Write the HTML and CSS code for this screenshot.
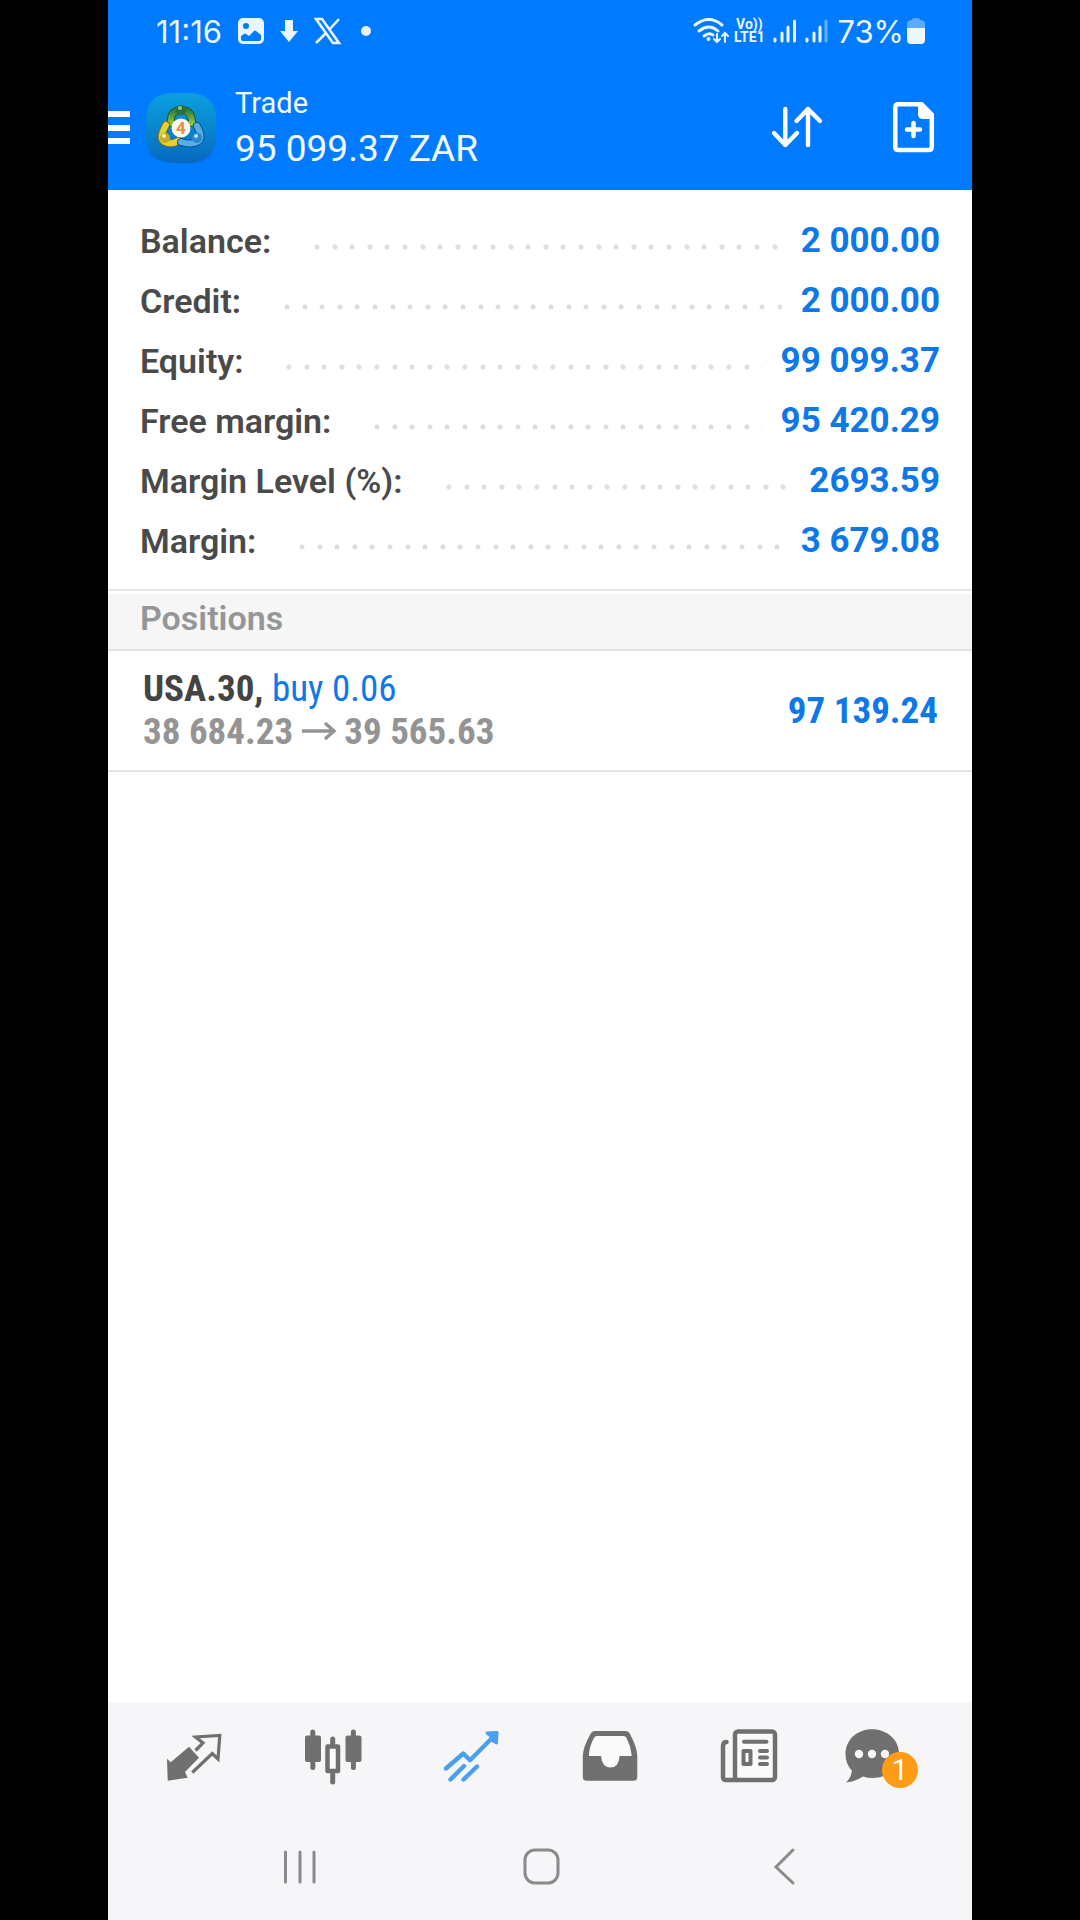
FILE: index.html
```html
<!DOCTYPE html>
<html lang="en">
<head>
<meta charset="utf-8">
<meta name="viewport" content="width=device-width, initial-scale=1">
<title>Trade</title>
<link rel="stylesheet" href="styles.css">
</head>
<body>
<div class="phone">
  <header class="header">
    <div class="status">
      <div class="status-left">
        <span class="clock">11:16</span>
        <svg width="26" height="26" viewBox="0 0 26 26" aria-hidden="true"><path fill="#eaf6ff" fill-rule="evenodd" d="M5 0h16a5 5 0 0 1 5 5v16a5 5 0 0 1-5 5H5a5 5 0 0 1-5-5V5a5 5 0 0 1 5-5zM8 5a3 3 0 1 0 0 6 3 3 0 0 0 0-6zM3 18v3q0 2 2 2h16q2 0 2-2v-4l-5-4q-1-1-2 0l-5 5-3-2q-1-1-2 0z"/></svg>
        <svg width="18" height="22" viewBox="0 0 18 22" aria-hidden="true"><path fill="#eaf6ff" d="M5 0h8v11h5l-9 11L0 11h5z"/></svg>
        <svg width="27" height="26" viewBox="0 0 27 26" aria-hidden="true"><path fill="none" stroke="#eaf6ff" stroke-width="2.600" d="M2 1h6l17 24h-6zM25 1 15 12M12 15 2 25"/></svg>
        <svg width="10" height="10" viewBox="0 0 10 10" aria-hidden="true"><circle cx="5" cy="5" r="5" fill="#eaf6ff"/></svg>
      </div>
      <div class="status-right">
        <svg width="36" height="28" viewBox="0 0 36 28" aria-hidden="true"><g fill="none" stroke="#eaf6ff" stroke-width="3" stroke-linecap="round"><path d="M2 8q14-11 27 0M6 14q10-8 19 0M11 19q5-4 9-1"/><path stroke-width="2" d="M24 17v8m-3-3 3 3 3-3M32 25v-9m-3 3 3-3 3 3"/></g><circle cx="15.500" cy="22" r="2" fill="#eaf6ff"/></svg>
        <span class="volte"><span>Vo))</span><span>LTE1</span></span>
        <svg class="signal" width="24" height="24" viewBox="0 0 24 24" aria-hidden="true"><path stroke="#eaf6ff" stroke-width="3" stroke-linecap="round" d="M2 20v2M9 14v8M15 8v14M21.500 2v20"/></svg>
        <svg class="signal" width="24" height="24" viewBox="0 0 24 24" aria-hidden="true"><path stroke="#eaf6ff" stroke-width="3" stroke-linecap="round" d="M2 20v2M9 14v8M15 8v14"/><path stroke="#5fb0ff" stroke-width="3" stroke-linecap="round" d="M21 2v20"/></svg>
        <span class="percent">73%</span>
        <svg width="18" height="26" viewBox="0 0 18 26" aria-hidden="true"><path fill="#58abff" d="M5 2q0-2 2-2h4q2 0 2 2 5 0 5 4v5H0V6q0-4 5-4z"/><path fill="#eef7ff" d="M0 10h18v12q0 4-4 4H4q-4 0-4-4z"/></svg>
      </div>
    </div>
    <div class="appbar">
      <button class="icon-btn" aria-label="Menu"><svg width="22" height="34" viewBox="0 0 22 34"><path fill="#fff" d="M0 0h22v6H0zM0 14h22v6H0zM0 27h22v6H0z"/></svg></button>
      <svg class="logo" width="70" height="70" viewBox="0 0 70 70" aria-hidden="true">
        <defs>
          <linearGradient id="tile" x1="0" y1="0" x2="0" y2="1"><stop offset="0" stop-color="#0a9fdf"/><stop offset=".5" stop-color="#0a86cd"/><stop offset="1" stop-color="#0768c0"/></linearGradient>
          <linearGradient id="green" x1="0" y1="0" x2="0" y2="1"><stop offset="0" stop-color="#2f7a3c"/><stop offset="1" stop-color="#8cc63e"/></linearGradient>
        </defs>
        <path fill="url(#tile)" d="M27 0h16q27 0 27 27v16q0 27-27 27H27Q0 70 0 43V27Q0 0 27 0z"/>
        <g fill="none" stroke-linecap="round">
          <path stroke="#1d5a33" stroke-width="8" d="M25 30q-1-13 10-13t11 13"/>
          <path stroke="url(#green)" stroke-width="6" d="M25 30q-1-13 10-13t11 13"/>
          <path stroke="#806f16" stroke-width="8" d="M20 32q-8 14-1 17t13-1"/>
          <path stroke="#e2d23a" stroke-width="6" d="M20 32q-8 14-1 17t13-1"/>
          <path stroke="#11508f" stroke-width="8" d="M51 33q7 13 0 16t-16 0"/>
          <path stroke="#55aee8" stroke-width="6" d="M51 33q7 13 0 16t-16 0"/>
        </g>
        <circle cx="35" cy="17" r="5" fill="#2c6e3a"/><circle cx="34" cy="15" r="2" fill="#8ec78e"/>
        <circle cx="19" cy="45" r="5" fill="#c9a92a"/><circle cx="18" cy="43" r="2" fill="#fff09a"/>
        <circle cx="51" cy="45" r="5" fill="#2a86ce"/><circle cx="50" cy="43" r="2" fill="#b9e2fb"/>
        <circle cx="35" cy="35" r="9.500" fill="#fdf8f0"/>
        <text x="35" y="41" class="logo-digit">4</text>
      </svg>
      <div class="titles">
        <h1 class="title">Trade</h1>
        <p class="total">95 099.37 ZAR</p>
      </div>
      <button class="icon-btn sort" aria-label="Sort"><svg width="56" height="56" viewBox="0 0 56 56"><path fill="none" stroke="#fff" stroke-width="4.400" stroke-linecap="round" stroke-linejoin="round" d="M16.300 9v36M5 33l11.300 12L28 33M39 45V9M27.500 21 39 9l12 12"/></svg></button>
      <button class="icon-btn" aria-label="New order"><svg width="44" height="56" viewBox="0 0 44 56"><path fill="none" stroke="#fff" stroke-width="4.500" stroke-linejoin="round" d="M6 4.200h23.500L39.800 14.500V47q0 3-3 3H6.300q-3 0-3-3V7.200q0-3 3-3z"/><path fill="#fff" d="M26 4v10q0 5 5 5h9v-5L30 4z"/><path stroke="#fff" stroke-width="4.500" stroke-linecap="round" d="M21.500 23v13M15 29.500h13"/></svg></button>
    </div>
  </header>

  <main class="main">
    <dl class="summary">
      <div class="row"><dt>Balance:</dt><dd>2 000.00</dd></div>
      <div class="row"><dt>Credit:</dt><dd>2 000.00</dd></div>
      <div class="row"><dt>Equity:</dt><dd>99 099.37</dd></div>
      <div class="row"><dt>Free margin:</dt><dd>95 420.29</dd></div>
      <div class="row"><dt>Margin Level (%):</dt><dd>2693.59</dd></div>
      <div class="row"><dt>Margin:</dt><dd>3 679.08</dd></div>
    </dl>
    <h2 class="section">Positions</h2>
    <div class="position">
      <div>
        <p class="symbol">USA.30, <span class="side">buy 0.06</span></p>
        <p class="prices">38 684.23 <svg width="34" height="26" viewBox="0 0 34 26" role="img" aria-label="to"><path fill="none" stroke="#949494" stroke-width="3.400" d="M0 13h32M23 5l9 8-9 8"/></svg> 39 565.63</p>
      </div>
      <p class="profit">97 139.24</p>
    </div>
  </main>

  <footer class="footer">
    <nav class="tabs" aria-label="Sections">
      <a class="tab" href="#quotes" aria-label="Quotes"><svg width="60" height="60" viewBox="0 0 60 60"><path fill="currentColor" d="M4 33.700 7.700 37.300 26 21.700 36 32.700 22 47l2.700 5.700-20 3z"/><path fill="none" stroke="currentColor" stroke-width="3.200" d="M32.500 25.500 40 18l-7.500-6 24.300-1.500L55 34l-5.700-5.500-20 19"/></svg></a>
      <a class="tab" href="#charts" aria-label="Charts"><svg width="60" height="60" viewBox="0 0 60 60"><g fill="currentColor"><rect x="3" y="10.500" width="16" height="26.500" rx="2"/><rect x="43.500" y="10.500" width="16" height="26.500" rx="2"/></g><path stroke="currentColor" stroke-width="5" stroke-linecap="round" d="M10.800 7v35.500M51.400 7v35.500M30.700 14v6M30.700 49v8"/><rect x="25.500" y="21.500" width="10.500" height="24.500" fill="#fafafa" stroke="currentColor" stroke-width="4.500" stroke-linejoin="round"/></svg></a>
      <a class="tab tab-active" href="#trade" aria-label="Trade" aria-current="page"><svg width="60" height="60" viewBox="0 0 60 60"><path fill="none" stroke="currentColor" stroke-width="4.400" stroke-linecap="round" stroke-linejoin="round" d="M5 43.500l17.300-15L29 35.200 55 9M9.500 54.500 23 41M22.500 54.500 36 41.500"/><path fill="currentColor" stroke="currentColor" stroke-width="3" stroke-linejoin="round" d="M46 8l10-.500L55.500 18 52 16l-1-4z"/></svg></a>
      <a class="tab" href="#history" aria-label="History"><svg width="60" height="60" viewBox="0 0 60 60"><path fill="#fafafa" d="M13 8h34l6 22v8q-12 8-23 8T7 38v-8z"/><path fill="currentColor" fill-rule="evenodd" d="M15 6h30.500q3 0 4.500 3 7 13 7.300 22v21q0 3.700-3.700 3.700H6.500q-3.700 0-3.700-3.700V31Q3 22 10.500 9q1.500-3 4.500-3zM17 11q-2 0-3 2Q9.500 21 9 29v2h12q1 11.500 9.500 11.500T39.500 31h12v-2q-.700-8-5-16-1-2-3-2z"/></svg></a>
      <a class="tab" href="#news" aria-label="News"><svg width="60" height="60" viewBox="0 0 60 60"><g fill="none" stroke="currentColor" stroke-width="4.500" stroke-linecap="round" stroke-linejoin="round"><rect x="16" y="6.500" width="40" height="48.500" rx="3" fill="#fafafa"/><path d="M7.500 17q-3 0-3.500 3.500V52q0 3 3 3h11"/><path stroke-width="4" d="M25 16.700h22.500M41 26h7M41 32.500h7M41 39h7M24.500 26h7v13h-7z"/></g></svg></a>
      <a class="tab" href="#messages" aria-label="Messages, 1 new"><svg width="80" height="60" viewBox="2 0 80 60"><path fill="currentColor" d="M26 4.300C41 4.300 53 15 53 28.500S42 53 27 53q-6 0-10-1.500Q8 57 0 57.500 5 53 6 46-.500 39-.500 29C-.500 15 11 4.300 26 4.300z"/><g fill="#f8f8f8"><circle cx="13" cy="29" r="4.200"/><circle cx="26" cy="29" r="4.200"/><circle cx="39" cy="29" r="4.200"/></g></svg><span class="badge">1</span></a>
    </nav>
    <div class="system">
      <button class="sys-btn" aria-label="Recent apps"><svg width="44" height="44" viewBox="0 0 44 44"><path stroke="currentColor" stroke-width="3" stroke-linecap="round" d="M10.500 8v30M25 8v30M39 8v30"/></svg></button>
      <button class="sys-btn" aria-label="Home"><svg width="44" height="44" viewBox="0 0 44 44"><rect x="7" y="6" width="33" height="33" rx="10" fill="none" stroke="currentColor" stroke-width="3"/></svg></button>
      <button class="sys-btn" aria-label="Back"><svg width="44" height="44" viewBox="0 0 44 44"><path fill="none" stroke="currentColor" stroke-width="3" stroke-linecap="round" d="M32 6 15 23l17 16"/></svg></button>
    </div>
  </footer>
</div>
</body>
</html>
```
FILE: styles.css
```css
* { box-sizing: border-box; }

body {
  margin: 0;
  background: #000;
  font-family: Roboto, "Liberation Sans", sans-serif;
}

h1, h2, p, dl, dd { margin: 0; font-weight: 400; }

svg { flex: none; overflow: visible; }

button {
  border: 0;
  padding: 0;
  background: none;
  color: inherit;
  font: inherit;
}

.phone {
  display: flex;
  flex-direction: column;
  width: 80%;
  min-height: 100vh;
  margin: 0 auto;
  background: #fff;
}

/* Header */
.header {
  background: #007aff;
  color: #f4fbff;
}

.status {
  display: flex;
  justify-content: space-between;
  align-items: center;
  height: 62px;
  padding: 0 47px 0 48px;
  font-family: Inter, Roboto, sans-serif;
  font-size: 31px;
  color: #eaf6ff;
}

.status-left { display: flex; align-items: center; gap: 16px; }
.status-left svg:last-child { margin-left: 4px; }
.clock { width: 66px; }
.status-right { display: flex; align-items: center; gap: 8px; }
.percent { margin-right: -5px; }

.volte {
  display: flex;
  flex-direction: column;
  align-items: center;
  width: 32px;
  margin-left: -4px;
  font: 700 14px/13px Roboto, sans-serif;
}

.appbar {
  display: flex;
  align-items: center;
  height: 128px;
  padding: 4px 36px 0 0;
}

.icon-btn { display: flex; }
.logo { margin: 0 19px 0 16px; }
.logo-digit {
  font: 700 17px Roboto, sans-serif;
  fill: #f08a3c;
  text-anchor: middle;
}
.titles { flex: 1; }
.title { font-size: 29px; line-height: 42px; }
.total { font-size: 37px; line-height: 50px; }
.sort { margin-right: 67px; }

/* Account summary */
.main { flex: 1; }

.summary {
  padding: 21px 32px 18px;
  border-bottom: 2px solid #e6e6e6;
  font-size: 35px;
  line-height: 60px;
}

.row { display: flex; }
.row dt { color: #4a4a4a; font-size: 34px; font-weight: 600; }
.row dd { order: 2; color: #0f78e8; font-weight: 700; }

/* Dotted leader between label and value */
.row::before {
  content: "";
  order: 1;
  flex: 1;
  margin: 0 19px 0 37px;
  background-image:
    radial-gradient(circle at 9px 36px, #dedede 2px, transparent 3px),
    radial-gradient(circle at 27px 36px, #dedede 2px, transparent 3px),
    radial-gradient(circle at 44px 36px, #dedede 2px, transparent 3px),
    radial-gradient(circle at 62px 36px, #dedede 2px, transparent 3px),
    radial-gradient(circle at 79px 36px, #dedede 2px, transparent 3px);
  background-size: 88px 60px;
}

/* Positions */
.section {
  margin-top: 3px;
  padding: 0 32px 6px;
  border-bottom: 2px solid #e2e2e2;
  background: #f6f6f6;
  color: #949698;
  font-size: 34px;
  font-weight: 600;
  line-height: 49px;
}

.position {
  display: flex;
  justify-content: space-between;
  align-items: center;
  padding: 16px 34px 17px 35px;
  border-bottom: 2px solid #e6e6e6;
  font-family: "Roboto Condensed", Roboto, sans-serif;
  font-size: 37px;
  line-height: 43px;
}
.position p { font-weight: 700; white-space: nowrap; }
.symbol { color: #444; }
.side { color: #0f78e8; font-weight: 400; }
.prices { color: #949494; }
.profit { color: #0f78e8; }

/* Bottom bars */
.footer { background: #f6f6f8; }

.tabs {
  display: flex;
  padding: 23px 15px 23px 16px;
  color: #707070;
}
.tab {
  position: relative;
  display: flex;
  flex: 1;
  justify-content: center;
  color: inherit;
}
.tab-active { color: #4a9fee; }
.badge {
  position: absolute;
  top: 27px;
  right: 39px;
  width: 36px;
  height: 36px;
  border-radius: 50%;
  background: #ff9c17;
  color: #fff;
  font-size: 29px;
  line-height: 37px;
  text-align: center;
}

.system {
  display: flex;
  padding: 36px 68px 32px;
  color: #8a8a8c;
}
.sys-btn {
  display: flex;
  flex: 1;
  justify-content: center;
}
```
